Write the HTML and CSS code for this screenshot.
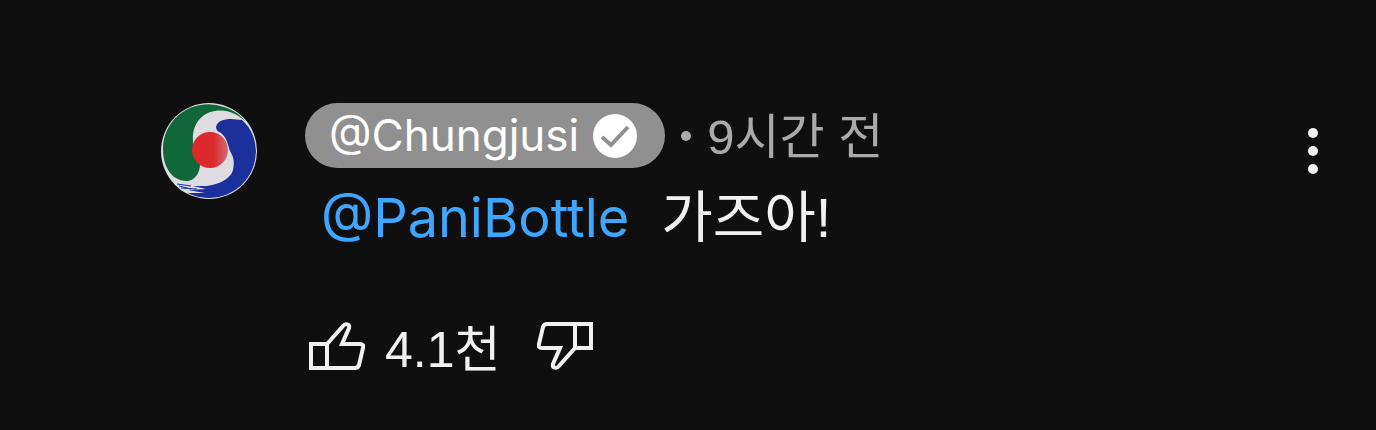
FILE: index.html
```html
<!DOCTYPE html>
<html lang="ko">
<head>
<meta charset="UTF-8" />
<title>댓글</title>
<meta name="viewport" content="width=device-width, initial-scale=1" />
<link rel="stylesheet" href="styles.css">
</head>
<body>
  <article class="comment">
    <a class="avatar" href="#" aria-label="@Chungjusi">
      <svg viewBox="0 0 96 96" aria-hidden="true">
        <defs>
          <clipPath id="disc"><circle cx="48" cy="48" r="47" /></clipPath>
          <linearGradient id="sun">
            <stop offset="0.6" stop-color="#dc2a2c" />
            <stop offset="1" stop-color="#d07074" />
          </linearGradient>
        </defs>
        <circle cx="48" cy="48" r="48" fill="#dedce2" />
        <g clip-path="url(#disc)">
          <path fill="#10683a" d="M84 18C76 5 52-1 37 2C17 6 2 24 2 46C2 58 6 67 11 72C16 77 22 78 27 78C34 77 39 70 39 61C38 53 31 50 32 38C31 22 40 10 54 8C66 6 76 11 84 18Z" />
          <path fill="#1c309c" d="M60 30C57 29 55 27 55 24C56 18 63 16 70 16L81 17C91 26 95 37 95 49C95 74 75 95 49 95C39 95 30 93 24 90L44 90L27 87L45 86L32 83L46 83C60 81 70 75 72 67C74 58 72 53 69 48C67 42 66 35 60 30Z" />
          <path fill="none" stroke="#1c309c" stroke-width="1" d="M16 81L30 83M20 85L36 86M18 83L30 86" />
        </g>
        <circle cx="49" cy="47" r="18" fill="url(#sun)" />
      </svg>
    </a>

    <div class="body">
      <header class="meta">
        <a class="author" href="#">
          <span>@Chungjusi</span>
          <svg class="verified" viewBox="0 0 44 44" role="img" aria-label="인증됨">
            <circle cx="22" cy="22" r="22" fill="#fff" />
            <path d="M9 23L18 31L35 13" fill="none" stroke="#909090" stroke-width="4" />
          </svg>
        </a>
        <span class="dot"></span>
        <time class="time">9시간 전</time>
      </header>

      <p class="text"><a class="mention" href="#">@PaniBottle</a><span>가즈아!</span></p>

      <div class="actions">
        <button class="vote" type="button" aria-label="좋아요">
          <svg viewBox="0 0 56 48" aria-hidden="true">
            <path d="M2 22H18V46H2ZM18 22L34 4C36 1 41 2 40 6L33 22H51Q55 22 54 26L50 43Q49 46 46 46H18" />
          </svg>
          <span>4.1천</span>
        </button>
        <button class="vote vote-down" type="button" aria-label="싫어요">
          <svg viewBox="0 0 56 48" aria-hidden="true">
            <path d="M2 22H18V46H2ZM18 22L34 4C36 1 41 2 40 6L33 22H51Q55 22 54 26L50 43Q49 46 46 46H18" />
          </svg>
        </button>
      </div>
    </div>

    <button class="menu" type="button" aria-label="더보기">
      <svg viewBox="0 0 10 46" aria-hidden="true">
        <circle cx="5" cy="5" r="5" />
        <circle cx="5" cy="23" r="5" />
        <circle cx="5" cy="41" r="5" />
      </svg>
    </button>
  </article>
</body>
</html>
```

FILE: styles.css
```css
:root {
  --bg: #0f0f0f;
  --text: #f1f1f1;
  --muted: #aaa;
  --link: #3ea6ff;
  --pill: #909090;
}

* {
  box-sizing: border-box;
}

body {
  margin: 0;
  background: var(--bg);
  color: var(--text);
  font-family: "Liberation Sans", "Noto Sans CJK KR", sans-serif;
}

a {
  color: inherit;
  text-decoration: none;
}

button {
  padding: 0;
  border: none;
  background: none;
  color: inherit;
  font: inherit;
  cursor: pointer;
}

svg {
  display: block;
}

.comment {
  display: flex;
  align-items: flex-start;
  padding: 103px 56px 56px 161px;
}

.avatar {
  flex: none;
  width: 96px;
  margin-right: 48px;
}

.body {
  flex: 1;
}

/* author, time */
.meta {
  display: flex;
  align-items: center;
  height: 65px;
  font-size: 49px;
  line-height: 65px;
}

.author {
  display: flex;
  align-items: center;
  gap: 14px;
  padding: 0 28px 0 24px;
  border-radius: 33px;
  background: var(--pill);
  color: #fff;
  font-family: Inter, sans-serif;
  font-size: 44px;
}

.verified {
  width: 44px;
}

.dot {
  width: 10px;
  height: 10px;
  margin: 0 16px;
  border-radius: 50%;
  background: var(--muted);
}

.time {
  padding-top: 4px;
  color: var(--muted);
}

.text {
  display: flex;
  gap: 32px;
  margin: 16px 0 0 16px;
  font-size: 56px;
  line-height: 68px;
}

.mention {
  color: var(--link);
  font-family: Inter, sans-serif;
  font-size: 54px;
}

/* like / dislike */
.actions {
  display: flex;
  align-items: flex-start;
  gap: 36px;
  margin: 70px 0 0 4px;
  font-size: 50px;
  line-height: 56px;
}

.vote {
  display: flex;
  align-items: flex-start;
  gap: 20px;
}

.vote svg {
  width: 56px;
  fill: none;
  stroke: var(--text);
  stroke-width: 4;
}

.vote-down svg {
  transform: rotate(180deg);
}

.menu {
  padding: 25px 2px 0;
}

.menu svg {
  width: 10px;
  fill: var(--text);
}
```
